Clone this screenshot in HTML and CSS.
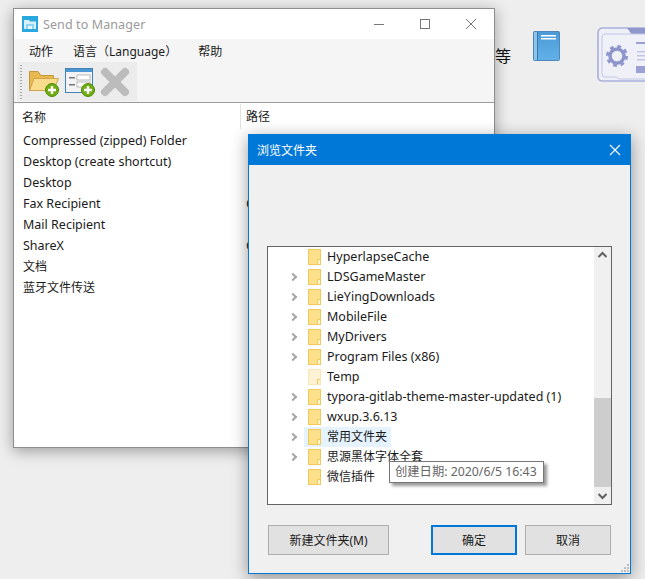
FILE: index.html
```html
<!DOCTYPE html>
<html lang="zh">
<head>
<meta charset="utf-8">
<title>Send to Manager</title>
<link rel="stylesheet" href="styles.css">
</head>
<body>
<div class="desktop">
  <span class="desk-text">等</span>
  <svg class="book" width="28" height="32" viewBox="0 0 28 32">
    <defs><linearGradient id="bk" x1="0" y1="0" x2="0" y2="1"><stop offset="0" stop-color="#4a9ad8"/><stop offset="1" stop-color="#63b1e8"/></linearGradient></defs>
    <rect x="0.5" y="1.5" width="26" height="29" rx="1" fill="url(#bk)" stroke="#4d86b8"/>
    <rect x="1" y="2" width="3" height="28" fill="#8cc4ec"/>
    <line x1="4.5" y1="2" x2="4.5" y2="30" stroke="#3d78ac"/>
    <rect x="8" y="5" width="15" height="1.5" fill="#fff"/>
    <rect x="8" y="8" width="15" height="1.5" fill="#fff"/>
  </svg>
  <svg class="gear-card" width="48" height="56" viewBox="0 0 48 56">
    <path d="M48 1H6Q1 1 1 6V50Q1 54 6 54H48" fill="#eef0f8" stroke="#aab0da" stroke-width="1.600"/>
    <path d="M30 1H48V9H36Z" fill="#8f96cc"/>
    <path d="M48 7H8Q5 7 5 10V47Q5 50 8 50H19L22 52H48" fill="#f0f1f8" stroke="#c2c6e4"/>
    <circle cx="20" cy="29" r="7" fill="none" stroke="#8f96cc" stroke-width="3.500"/>
    <circle cx="20" cy="29" r="9.500" fill="none" stroke="#8f96cc" stroke-width="3" stroke-dasharray="3.700 3.770"/>
    <rect x="39" y="15" width="9" height="2" fill="#9ba1d2"/>
    <rect x="40" y="24" width="8" height="1.500" fill="#c2c6e4"/>
    <rect x="40" y="28" width="8" height="1.500" fill="#c2c6e4"/>
    <rect x="40" y="32" width="8" height="1.500" fill="#c2c6e4"/>
    <rect x="39" y="39" width="9" height="7" fill="#9ba1d2"/>
  </svg>

  <section class="win manager">
    <header class="mgr-title">
      <svg class="app-icon" width="16" height="16" viewBox="0 0 16 16">
        <rect width="16" height="16" fill="#29a8e0"/>
        <path d="M2 4H7L8 5.500H14V13H2Z" fill="#d8f0fa"/>
        <path d="M4 8H12V13H4Z" fill="#8fd4f0"/>
        <rect x="6" y="10" width="4" height="3" fill="#e8f7fc"/>
      </svg>
      <span class="mgr-title-text">Send to Manager</span>
      <span class="win-controls">
        <svg width="12" height="12" viewBox="0 0 12 12"><line x1="1" y1="6.500" x2="11" y2="6.500" stroke="#777"/></svg>
        <svg width="12" height="12" viewBox="0 0 12 12"><rect x="1.500" y="1.500" width="9" height="9" fill="none" stroke="#777"/></svg>
        <svg width="12" height="12" viewBox="0 0 12 12"><path d="M1 1L11 11M11 1L1 11" stroke="#777" fill="none"/></svg>
      </span>
    </header>
    <nav class="menu">
      <span class="menu-a">动作</span>
      <span class="menu-b">语言（Language）</span>
      <span class="menu-c">帮助</span>
    </nav>
    <div class="toolbar">
      <div class="tools">
        <i class="tools-grip"></i>
        <svg width="32" height="30" viewBox="0 0 32 30">
          <path d="M1.500 4.500V23.500H25.500V8.500H13L10 4.500Z" fill="#e8b94e" stroke="#c4963a"/>
          <path d="M1.500 23.500L6 11.500H30.500L25.500 23.500Z" fill="#f9dc8c" stroke="#d1a548"/>
          <circle cx="24" cy="23" r="6.500" fill="#6fae10" stroke="#4f8a08"/>
          <path d="M24 19V27M20 23H28" stroke="#fff" stroke-width="2.400"/>
        </svg>
        <svg width="32" height="30" viewBox="0 0 32 30">
          <rect x="1.500" y="1.500" width="27" height="24" fill="#f3f3f3" stroke="#3f83bd"/>
          <rect x="2" y="2" width="26" height="3" fill="#4b97d4"/>
          <rect x="13" y="8" width="13" height="5" fill="#fff" stroke="#bbb"/>
          <rect x="13" y="15" width="13" height="5" fill="#fff" stroke="#bbb"/>
          <rect x="5" y="10" width="6" height="1.500" fill="#777"/>
          <rect x="5" y="17" width="6" height="1.500" fill="#777"/>
          <circle cx="24" cy="23" r="6.500" fill="#6fae10" stroke="#4f8a08"/>
          <path d="M24 19V27M20 23H28" stroke="#fff" stroke-width="2.400"/>
        </svg>
        <svg width="30" height="30" viewBox="0 0 30 30">
          <path d="M5 5L25 25M25 5L5 25" stroke="#bcbcbc" stroke-width="8" stroke-linecap="round"/>
        </svg>
      </div>
    </div>
    <div class="list">
      <div class="list-head">
        <span class="col-name">名称</span>
        <span class="col-path">路径</span>
      </div>
      <div class="list-row"><span class="col-name">Compressed (zipped) Folder</span></div>
      <div class="list-row"><span class="col-name">Desktop (create shortcut)</span></div>
      <div class="list-row"><span class="col-name">Desktop</span></div>
      <div class="list-row"><span class="col-name">Fax Recipient</span><span class="col-path">C</span></div>
      <div class="list-row"><span class="col-name">Mail Recipient</span></div>
      <div class="list-row"><span class="col-name">ShareX</span><span class="col-path">C</span></div>
      <div class="list-row"><span class="col-name cjk">文档</span></div>
      <div class="list-row"><span class="col-name cjk">蓝牙文件传送</span></div>
    </div>
  </section>

  <section class="win dialog">
    <header class="dlg-title">
      <span>浏览文件夹</span>
      <svg width="12" height="12" viewBox="0 0 12 12"><path d="M1 1L11 11M11 1L1 11" stroke="#fff" stroke-width="1.100" fill="none"/></svg>
    </header>
    <div class="dlg-body">
      <div class="tree">
        <ul class="tree-list">
          <li class="node leaf"><i class="chev"></i><i class="folder"></i><span>HyperlapseCache</span></li>
          <li class="node"><i class="chev"></i><i class="folder"></i><span>LDSGameMaster</span></li>
          <li class="node"><i class="chev"></i><i class="folder"></i><span>LieYingDownloads</span></li>
          <li class="node"><i class="chev"></i><i class="folder"></i><span>MobileFile</span></li>
          <li class="node"><i class="chev"></i><i class="folder"></i><span>MyDrivers</span></li>
          <li class="node"><i class="chev"></i><i class="folder"></i><span>Program Files (x86)</span></li>
          <li class="node leaf hidden"><i class="chev"></i><i class="folder"></i><span>Temp</span></li>
          <li class="node"><i class="chev"></i><i class="folder"></i><span>typora-gitlab-theme-master-updated (1)</span></li>
          <li class="node"><i class="chev"></i><i class="folder"></i><span>wxup.3.6.13</span></li>
          <li class="node hot"><i class="chev"></i><i class="folder"></i><span class="cjk">常用文件夹</span></li>
          <li class="node"><i class="chev"></i><i class="folder"></i><span class="cjk">思源黑体字体全套</span></li>
          <li class="node leaf"><i class="chev"></i><i class="folder"></i><span class="cjk">微信插件</span></li>
        </ul>
        <div class="scrollbar">
          <svg class="sb-arrow" width="17" height="17" viewBox="0 0 17 17"><path d="M4.500 10L8.500 6L12.500 10" fill="none" stroke="#606060" stroke-width="2"/></svg>
          <div class="sb-track"><div class="sb-thumb"></div></div>
          <svg class="sb-arrow" width="17" height="17" viewBox="0 0 17 17"><path d="M4.500 7L8.500 11L12.500 7" fill="none" stroke="#606060" stroke-width="2"/></svg>
        </div>
      </div>
      <div class="dlg-buttons">
        <button class="btn btn-new">新建文件夹(M)</button>
        <button class="btn btn-ok">确定</button>
        <button class="btn btn-cancel">取消</button>
      </div>
    </div>
    <svg class="grip" width="10" height="10" viewBox="0 0 10 10" fill="#bdbdbd"><rect x="7" y="1" width="2" height="2"/><rect x="4" y="4" width="2" height="2"/><rect x="7" y="4" width="2" height="2"/><rect x="1" y="7" width="2" height="2"/><rect x="4" y="7" width="2" height="2"/><rect x="7" y="7" width="2" height="2"/></svg>
  </section>

  <div class="tooltip">创建日期: 2020/6/5 16:43</div>
</div>
</body>
</html>
```
FILE: styles.css
```css
* { box-sizing: border-box; }
html, body { margin: 0; padding: 0; }
body {
  font-family: "Noto Sans", "Noto Sans CJK SC", sans-serif;
  font-size: 12.5px;
  color: #1a1a1a;
}
.cjk { font-size: 12px; }
.desktop {
  position: relative;
  width: 645px;
  height: 579px;
  overflow: hidden;
  background: #eeeeee;
}
.desk-text { position: absolute; left: 495px; top: 47px; font-size: 16px; line-height: 18px; color: #111; }
.book { position: absolute; left: 533px; top: 30px; }
.gear-card { position: absolute; left: 597px; top: 27px; }

.win { position: absolute; display: flex; flex-direction: column; }

/* Manager window */
.manager {
  left: 13px;
  top: 8px;
  width: 482px;
  height: 440px;
  background: #fff;
  border: 1px solid #8e8e8e;
  box-shadow: 0 3px 14px rgba(0, 0, 0, 0.35);
}
.mgr-title { display: flex; align-items: center; height: 30px; padding-left: 8px; flex: none; }
.app-icon { margin-right: 5px; }
.mgr-title-text { font-size: 12.5px; color: #9a9a9a; letter-spacing: 0.1px; }
.win-controls { margin-left: auto; display: flex; gap: 34px; padding-right: 17px; }
.menu { display: flex; align-items: center; height: 23px; background: #f5f5f5; flex: none; font-size: 12px; }
.menu-a { margin-left: 15px; }
.menu-b { margin-left: 20px; }
.menu-c { margin-left: 21px; }
.toolbar { height: 41px; background: #f5f5f5; flex: none; border-bottom: 1px solid #9a9a9a; }
.tools {
  display: flex;
  align-items: center;
  width: 120px;
  height: 39px;
  margin-left: 3px;
  background: #ececec;
}
.tools svg { margin-right: 4px; flex: none; }
.tools-grip {
  width: 2px;
  height: 34px;
  margin: 0 6px 0 3px;
  background: repeating-linear-gradient(to bottom, #a8a8a8 0 1px, transparent 1px 3px);
  flex: none;
}
.list { flex: 1; background: #fff; overflow: hidden; }
.list-head { display: flex; height: 27px; align-items: center; color: #222; font-size: 12px; }
.list-head .col-name { padding-left: 8px; }
.list-head .col-path { border-left: 1px solid #e2e2e2; height: 25px; line-height: 25px; padding-left: 5px; }
.list-row { display: flex; height: 21px; align-items: center; }
.col-name { width: 226px; padding-left: 9px; flex: none; white-space: nowrap; }
.list-row .cjk { margin-bottom: 2px; }
.list-row .col-path { padding-left: 5px; margin-left: 1px; }

/* Browse dialog */
.dialog {
  left: 248px;
  top: 134px;
  width: 383px;
  height: 440px;
  background: #f0f0f0;
  border: 1px solid #0078d7;
  box-shadow: 0 4px 16px rgba(0, 0, 0, 0.4);
}
.dlg-title {
  display: flex;
  align-items: center;
  justify-content: space-between;
  height: 30px;
  padding: 0 9px 0 8px;
  background: #0078d7;
  color: #fff;
  flex: none;
  font-size: 12px;
}
.dlg-body { flex: 1; display: flex; flex-direction: column; padding: 81px 18px 18px 18px; }
.tree {
  display: flex;
  height: 259px;
  background: #fff;
  border: 1px solid #646464;
  flex: none;
}
.tree-list { list-style: none; margin: 0; padding: 0; flex: 1; overflow: hidden; }
.node { display: flex; align-items: center; height: 20px; white-space: nowrap; }
.chev {
  width: 6px;
  height: 6px;
  margin: 0 12px 0 22px;
  border-top: 2px solid #a6a6a6;
  border-right: 2px solid #a6a6a6;
  transform: rotate(45deg);
  flex: none;
}
.leaf .chev { visibility: hidden; }
.folder {
  position: relative;
  width: 13px;
  height: 16px;
  margin-right: 6px;
  background: #fde08a;
  border: 1px solid #f2c95c;
  flex: none;
}
.folder::after {
  content: "";
  position: absolute;
  right: 0;
  bottom: 0;
  width: 2px;
  height: 4px;
  background: #fff3c8;
  border-left: 1px solid #f2c95c;
  border-top: 1px solid #f2c95c;
  box-sizing: content-box;
}
.hidden .folder { background: #fdf3d4; border-color: #f8e8b8; }
.node span { display: inline-block; padding-right: 3px; margin-bottom: 2px; }
.hot { position: relative; }
.hot::before {
  content: "";
  position: absolute;
  left: 36px;
  top: 0;
  width: 87px;
  height: 20px;
  background: #e5f3ff;
}
.hot > i, .hot > span { position: relative; }
.hot > i.chev { transform: rotate(45deg); }
.scrollbar { width: 17px; flex: none; display: flex; flex-direction: column; background: #f0f0f0; }
.sb-arrow { flex: none; display: block; }
.sb-track { flex: 1; display: flex; flex-direction: column; justify-content: flex-end; }
.sb-thumb { height: 89px; background: #cdcdcd; }
.dlg-buttons { display: flex; margin-top: 20px; padding-left: 1px; }
.btn {
  height: 30px;
  background: #e1e1e1;
  border: 1px solid #adadad;
  font: inherit;
  font-size: 12px;
  color: #1a1a1a;
  padding: 0;
}
.btn-new { width: 121px; }
.btn-ok { width: 86px; margin-left: 42px; border: 2px solid #0078d7; }
.btn-cancel { width: 86px; margin-left: 8px; }
.grip { position: absolute; right: 0; bottom: 0; }

.tooltip {
  position: absolute;
  left: 389px;
  top: 461px;
  width: 155px;
  height: 22px;
  padding-left: 5px;
  font-size: 12.3px;
  line-height: 20px;
  background: #fff;
  border: 1px solid #767676;
  color: #666;
  box-shadow: 3px 3px 3px rgba(0, 0, 0, 0.4);
  white-space: nowrap;
}
```
